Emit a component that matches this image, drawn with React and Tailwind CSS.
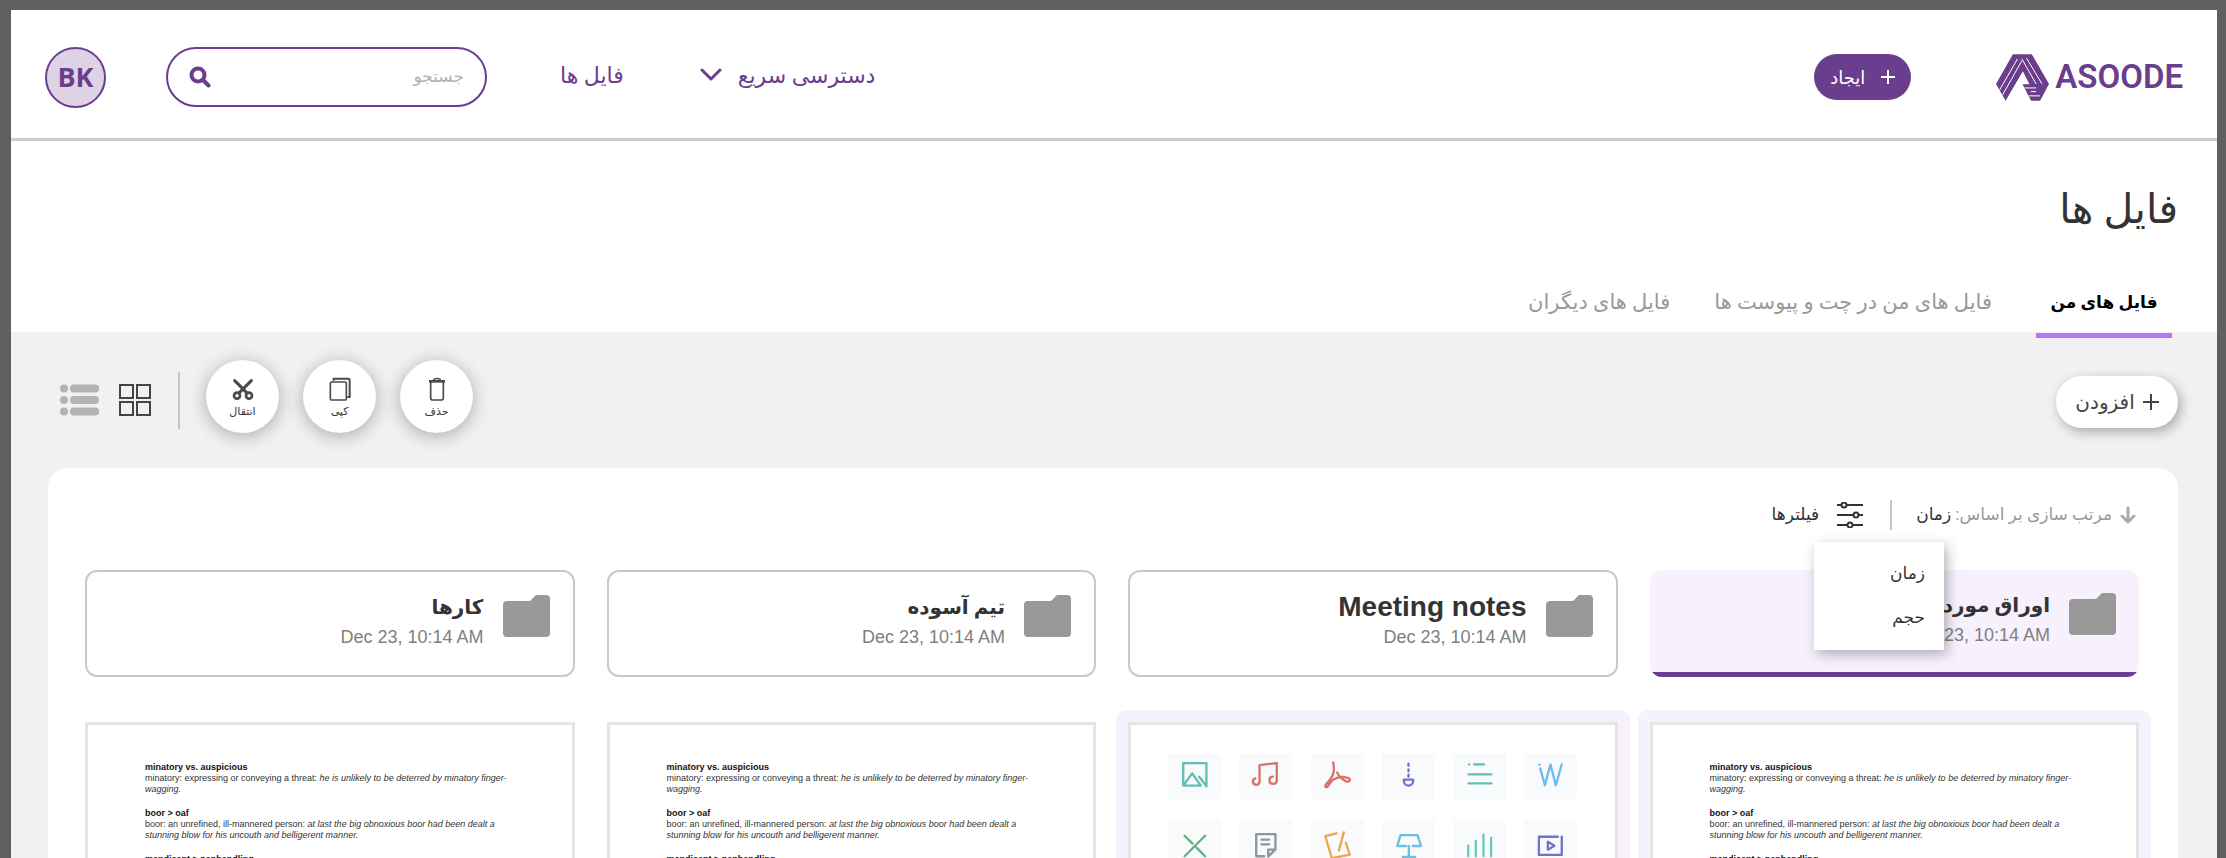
import React from "react";

const FA = "font-['Roboto','DejaVu_Sans',sans-serif]";

function Logo() {
  return (
    <a href="#home" dir="ltr" aria-label="ASOODE" className="flex items-center gap-[6px] text-[#6b3d8d]">
      <svg viewBox="47 40 160 141" className="h-[47px] w-[53px]" aria-hidden="true">
        <path fill="currentColor" d="M98 40H155L207 130L180 181H153L127 131H148L128 92L76 181L47 130Z" />
        <g fill="none" stroke="#fff" strokeWidth="3">
          <path d="M112 54L58 148" />
          <path d="M125 60L67 163" />
          <path d="M125 54L168 130" />
          <path d="M139 52L186 130" />
          <path d="M133 142H168" />
          <path d="M152 153H168" />
          <path d="M146 166H180" />
        </g>
      </svg>
      <span className="font-['Roboto',sans-serif] text-[33px] leading-10 font-semibold">ASOODE</span>
    </a>
  );
}

function Header() {
  return (
    <header className="flex h-[131px] items-center border-b-[3px] border-[#cdcdcd] bg-white px-[34px] pt-[6px] text-[#6b3d8d]">
      <Logo />
      <button type="button" className="mr-[85px] flex h-[46px] w-[97px] items-center justify-center gap-4 rounded-full bg-[#6b3d8d] text-[18px] text-white">
        <svg viewBox="0 0 14 14" className="size-[14px]" stroke="currentColor" strokeWidth="2" aria-hidden="true">
          <path d="M7 0V14M0 7H14" />
        </svg>
        <span>ایجاد</span>
      </button>
      <nav className="mr-auto flex items-center gap-[76px] pb-1 text-[22px]">
        <button type="button" className="flex items-center gap-4">
          <span>دسترسی سریع</span>
          <svg viewBox="0 0 22 14" className="h-[14px] w-[22px]" fill="none" stroke="currentColor" strokeWidth="3" strokeLinecap="round" strokeLinejoin="round" aria-hidden="true">
            <path d="M2 2L11 11L20 2" />
          </svg>
        </button>
        <a href="#files">فایل ها</a>
      </nav>
      <label className="mr-[73px] flex h-[60px] w-[321px] items-center rounded-[30px] border-2 border-[#6b3d8d] px-[21px]">
        <input type="search" aria-label="جستجو" placeholder="جستجو" className="min-w-0 flex-1 bg-transparent text-[17px] outline-none placeholder:text-[#b0b0b0]" />
        <svg viewBox="0 0 22 22" className="size-[22px]" fill="none" stroke="currentColor" strokeWidth="4" strokeLinecap="round" aria-hidden="true">
          <circle cx="9" cy="9" r="6.500" />
          <path d="M14.500 14.500L19.500 19.500" />
        </svg>
      </label>
      <button type="button" className="mr-[60px] flex size-[61px] items-center justify-center rounded-full border-2 border-[#6b3d8d] bg-[#ded3e4] font-['Open_Sans',sans-serif] text-[27px] font-bold">
        BK
      </button>
    </header>
  );
}

function PageTitle() {
  return (
    <section className="flow-root bg-white pr-[39px] pt-9">
      <h1 className="text-[41px] leading-[64px] text-[#333]">فایل ها</h1>
      <div role="tablist" className="relative mt-8 -mb-[6px] flex gap-[44px] pr-[6px] text-[21px] text-[#999]">
        <button type="button" role="tab" aria-selected="true" className="mr-0 h-[65px] w-[136px] border-b-[5px] border-[#b877fa] text-[17px] font-bold text-black">
          فایل های من
        </button>
        <button type="button" role="tab" aria-selected="false" className="h-[60px]">فایل های من در چت و پیوست ها</button>
        <button type="button" role="tab" aria-selected="false" className="h-[60px]">فایل های دیگران</button>
      </div>
    </section>
  );
}

function RoundAction({ label, children }) {
  return (
    <button type="button" className="flex size-[73px] flex-col items-center justify-center gap-1 rounded-full bg-white pt-1 text-[11px] leading-[14px] text-[#333] shadow-[0_3px_18px_rgba(0,0,0,0.3)]">
      <svg viewBox="0 0 66 72" className="h-[24px] w-[22px]" fill="none" stroke="#4a4a4a" strokeWidth="5" aria-hidden="true">
        {children}
      </svg>
      <span>{label}</span>
    </button>
  );
}

function Toolbar() {
  return (
    <div className="flex h-[136px] items-center justify-between pr-[39px] pl-[49px]">
      <button type="button" className="mt-1 flex h-[52px] w-[122px] items-center justify-center gap-2 rounded-full bg-white text-[20px] text-[#444] shadow-[3px_4px_12px_rgba(0,0,0,0.3)]">
        <svg viewBox="0 0 16 16" className="size-4" stroke="currentColor" strokeWidth="2" aria-hidden="true">
          <path d="M8 0V16M0 8H16" />
        </svg>
        <span>افزودن</span>
      </button>
      <div className="flex items-center">
        <div className="flex gap-6 pb-2">
          <RoundAction label="حذف">
            <path d="M9 13H57" strokeWidth="8" />
            <path d="M22 9C25 3 41 3 44 9" />
            <path d="M14 14V63Q14 69 20 69H46Q52 69 52 63V14" />
          </RoundAction>
          <RoundAction label="کپی">
            <rect x="4" y="15" width="48" height="54" rx="4" />
            <path d="M14 11V5H58Q62 5 62 9V60H55" strokeWidth="6" />
          </RoundAction>
          <RoundAction label="انتقال">
            <path d="M8 11L44 47M58 11L22 47" strokeWidth="9" strokeLinecap="round" />
            <circle cx="15" cy="56" r="9" strokeWidth="8" />
            <circle cx="51" cy="56" r="9" strokeWidth="8" />
          </RoundAction>
        </div>
        <div className="mr-[26px] h-[57px] w-[2px] bg-[#c4c4c4]" />
        <button type="button" aria-label="نمای شبکه‌ای" className="mr-[27px]">
          <svg viewBox="0 0 32 32" className="size-8" fill="none" stroke="#444" strokeWidth="2" aria-hidden="true">
            <path d="M1 1H14V14H1ZM18 1H31V14H18ZM1 18H14V31H1ZM18 18H31V31H18Z" />
          </svg>
        </button>
        <button type="button" aria-label="نمای فهرستی" className="mr-[20px]">
          <svg viewBox="0 0 39 32" className="h-8 w-[39px]" fill="#b3b3b3" aria-hidden="true">
            <circle cx="4" cy="4.500" r="4" />
            <circle cx="4" cy="16" r="4" />
            <circle cx="4" cy="27.500" r="4" />
            <rect x="10" y="0.500" width="29" height="8" rx="4" />
            <rect x="10" y="12" width="29" height="8" rx="4" />
            <rect x="10" y="23.500" width="29" height="8" rx="4" />
          </svg>
        </button>
      </div>
    </div>
  );
}

function SortRow() {
  return (
    <div className="relative flex h-10 items-center pr-[3px] text-[17px] text-[#333]">
      <button type="button" aria-haspopup="menu" aria-expanded="true" className="flex items-center gap-2">
        <svg viewBox="0 0 16 18" className="h-[18px] w-4" fill="none" stroke="#aaa" strokeWidth="3" strokeLinecap="round" strokeLinejoin="round" aria-hidden="true">
          <path d="M8 2V16M2 10L8 16L14 10" />
        </svg>
        <span>
          <span className="text-[#999]">مرتب سازی بر اساس:</span> زمان
        </span>
      </button>
      <div className="mr-[24px] h-[30px] w-[2px] bg-[#c4c4c4]" />
      <button type="button" className="mr-[27px] flex items-center gap-[18px]">
        <svg viewBox="0 0 26 26" className="size-[26px]" fill="#fff" stroke="#333" strokeWidth="2" aria-hidden="true">
          <path d="M0 3H26M0 13H26M0 23H26" />
          <circle cx="7" cy="3" r="2.500" />
          <circle cx="19" cy="13" r="2.500" />
          <circle cx="13" cy="23" r="2.500" />
        </svg>
        <span>فیلترها</span>
      </button>
      <div role="menu" className="absolute top-[47px] right-[195px] z-10 flex w-[130px] flex-col bg-white py-[10px] shadow-[3px_4px_12px_rgba(0,0,0,0.3)]">
        <button type="button" role="menuitem" className="h-11 px-[19px] text-right">زمان</button>
        <button type="button" role="menuitem" className="h-11 px-[19px] text-right">حجم</button>
      </div>
    </div>
  );
}

function Folder({ name, latin, selected }) {
  return (
    <button
      type="button"
      className={
        "flex h-[107px] items-start gap-[19px] overflow-hidden rounded-[12px] pt-[23px] pr-[23px] text-right " +
        (selected
          ? "bg-[linear-gradient(to_top,#6b3d8d_5px,#f7f1fe_5px)]"
          : "border-2 border-[#c9c9c9] bg-white")
      }
    >
      <svg viewBox="0 0 47 42" className="h-[42px] w-[47px]" fill="#999" aria-hidden="true">
        <path d="M4 6H26Q28 6 29 4L31 2Q32 0 34 0H43Q47 0 47 4V38Q47 42 43 42H4Q0 42 0 38V10Q0 6 4 6Z" />
      </svg>
      <span className="flex flex-col">
        <span className={latin ? "font-['Liberation_Sans',sans-serif] text-[28px] leading-[24px] font-bold text-[#333]" : "text-[20px] leading-[24px] font-bold text-[#333]"}>
          {name}
        </span>
        <span dir="ltr" className="mt-2 font-['Liberation_Sans',sans-serif] text-[18px] leading-5 text-[#808080]">
          Dec 23, 10:14 AM
        </span>
      </span>
    </button>
  );
}

function TextPage() {
  return (
    <div dir="ltr" className="flex h-[420px] flex-col gap-[13px] border-[3px] border-[#e5e5e5] bg-white pt-[37px] pr-[56px] pl-[57px] font-['Liberation_Sans',sans-serif] text-[9px] leading-[11px] text-[#333]">
      <div>
        <h3 className="font-bold text-[#111]">minatory vs. auspicious</h3>
        <p>
          minatory: expressing or conveying a threat: <i>he is unlikely to be deterred by minatory finger-wagging.</i>
        </p>
      </div>
      <div>
        <h3 className="font-bold text-[#111]">boor &gt; oaf</h3>
        <p>
          boor: an unrefined, ill-mannered person: <i>at last the big obnoxious boor had been dealt a stunning blow for his uncouth and belligerent manner.</i>
        </p>
      </div>
      <h3 className="font-bold text-[#111]">mendicant &gt; panhandling</h3>
    </div>
  );
}

const FIRST_ROW = [
  { color: "#5fbfb5", d: "M116 97V27H46V95H99L73 58L47 94M94 68L116 97" },
  { color: "#d9726c", d: "M49 73A10 10 0 1 0 62 84V33L114 27V80A11 11 0 1 1 102 68" },
  { color: "#d9726c", d: "M67 25C72 50 70 66 46 90C38 100 48 104 54 92C66 70 90 66 108 71C122 72 120 86 106 82C92 76 84 66 79 55" },
  { color: "#7670cc", d: "M80 29V35M80 46V52M80 62V68M66 77H94V81A14 14 0 0 1 66 81Z" },
  { color: "#5fbfb5", d: "M48 31H49M64 31H94M47 61H116M47 88H116" },
  { color: "#6cbcf2", d: "M46 32H47M49 43L63 94L80 31L96 94L114 31" },
];

const SECOND_ROW = [
  { color: "#63b181", d: "M50 50L74 74M112 50L50 112M86 86L112 112" },
  { color: "#8b97a0", d: "M76 112H52V45H110V91L88 113V92H108M68 62H91M68 76H91" },
  { color: "#e8a94e", d: "M77 43L43 51L63 118L117 107L105 71M99 40L84 95" },
  { color: "#6fc0de", d: "M73 81H46L56 48H107L118 81H93M81 81V113M63 114H100" },
  { color: "#6fc6be", d: "M46 80V112M69 66V112M92 46V112M115 56V112" },
  { color: "#7670cc", d: "M102 53H45V108H114V53M72 68L92 80L72 92Z" },
];

function IconTile({ icon, cropped }) {
  return (
    <svg
      viewBox={cropped ? "0 0 160 141" : "0 0 160 159"}
      className={cropped ? "h-[47px] w-[53px] rounded-b-[3px] bg-[#f8fafc]" : "h-[53px] w-[53px] rounded-[3px] bg-[#f8fafc]"}
      fill="none"
      stroke={icon.color}
      strokeWidth="7"
      strokeLinecap="round"
      strokeLinejoin="round"
      aria-hidden="true"
    >
      <path d={icon.d} />
    </svg>
  );
}

function IconSheet() {
  return (
    <div dir="ltr" className="flex h-[420px] flex-col gap-[18px] border-[3px] border-[#e5e5e5] bg-white px-[37px] pt-[29px]">
      <div className="flex justify-between">
        {FIRST_ROW.map((icon, i) => (
          <IconTile key={i} icon={icon} cropped />
        ))}
      </div>
      <div className="flex justify-between">
        {SECOND_ROW.map((icon, i) => (
          <IconTile key={i} icon={icon} />
        ))}
      </div>
    </div>
  );
}

function Thumb({ selected, children }) {
  return <article className={selected ? "-mx-3 -mt-3 rounded-[10px] bg-[#f7f1fe] p-3" : ""}>{children}</article>;
}

export default function App() {
  return (
    <div dir="rtl" className={"h-screen overflow-hidden bg-[#606060] pt-[10px] pr-[9px] pl-[11px] " + FA}>
      <div className="bg-[#f1f1f1]">
        <Header />
        <main>
          <PageTitle />
          <Toolbar />
          <section className="mr-[39px] ml-[37px] rounded-t-[20px] bg-white pt-[27px] pr-[39px] pl-[37px]">
            <SortRow />
            <div className="mt-[35px] grid grid-cols-4 gap-x-8 gap-y-[45px]">
              <Folder name="اوراق مورد نیاز" selected />
              <Folder name="Meeting notes" latin />
              <Folder name="تیم آسوده" />
              <Folder name="کارها" />
              <Thumb selected>
                <TextPage />
              </Thumb>
              <Thumb selected>
                <IconSheet />
              </Thumb>
              <Thumb>
                <TextPage />
              </Thumb>
              <Thumb>
                <TextPage />
              </Thumb>
            </div>
          </section>
        </main>
      </div>
    </div>
  );
}
